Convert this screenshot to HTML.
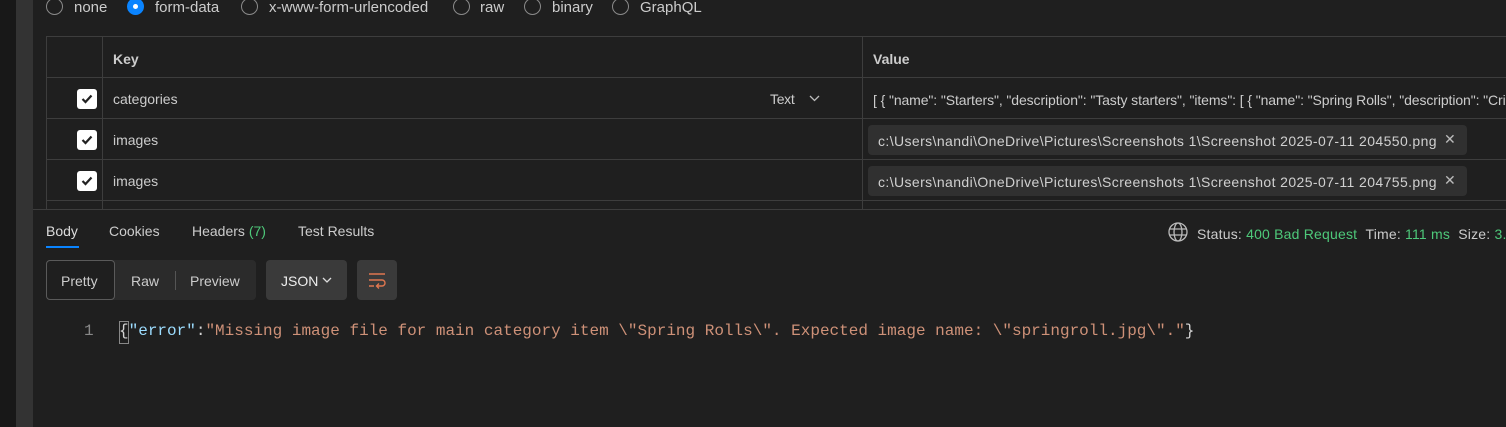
<!DOCTYPE html>
<html><head><meta charset="utf-8"><style>
*{box-sizing:border-box;margin:0;padding:0}
body{width:1506px;height:427px;background:#1f1f1f;position:relative;overflow:hidden;font-family:"Liberation Sans",sans-serif;color:#cccccc;font-size:14px}
.abs{position:absolute;white-space:nowrap}
.radio{position:absolute;width:17px;height:17px;border:1.5px solid #8a8a8a;border-radius:50%;top:-2px}
.cb{position:absolute;left:77px;width:20px;height:20px;background:#fff;border-radius:3px}
.cb svg{position:absolute;left:4px;top:5px}
.hl{position:absolute;left:46px;right:0;height:1px;background:#3d3d3d}
.vl{position:absolute;width:1px;background:#3d3d3d}
.chip{position:absolute;left:868px;width:599px;height:30px;background:#303030;border-radius:4px;font-size:14px;letter-spacing:0.4px;padding:8px 0 0 10px;color:#d0d0d0}
.chip span{position:absolute;left:576px;top:6px;color:#bbb;letter-spacing:0}
.code{font-family:"Liberation Mono",monospace;font-size:16px;letter-spacing:0}
</style></head><body>
<div class="abs" style="left:0;top:0;width:16px;height:427px;background:#181818"></div>
<div class="abs" style="left:16px;top:0;width:17px;height:427px;background:#333"></div>

<div class="radio" style="left:46px"></div><div class="abs" style="left:74px;top:-1px;font-size:15px">none</div>
<div class="radio" style="left:127px;background:#0a84ff;border-color:#0a84ff"><div style="position:absolute;left:4.5px;top:4.5px;width:5px;height:5px;background:#fff;border-radius:50%"></div></div><div class="abs" style="left:155px;top:-1px;font-size:15px">form-data</div>
<div class="radio" style="left:241px"></div><div class="abs" style="left:269px;top:-1px;font-size:15px">x-www-form-urlencoded</div>
<div class="radio" style="left:453px"></div><div class="abs" style="left:480px;top:-1px;font-size:15px">raw</div>
<div class="radio" style="left:524px"></div><div class="abs" style="left:552px;top:-1px;font-size:15px">binary</div>
<div class="radio" style="left:612px"></div><div class="abs" style="left:640px;top:-1px;font-size:15px">GraphQL</div>

<div class="hl" style="top:36px"></div>
<div class="hl" style="top:77px"></div>
<div class="hl" style="top:118px"></div>
<div class="hl" style="top:159px"></div>
<div class="hl" style="top:200px"></div>
<div class="vl" style="left:46px;top:36px;height:173px"></div>
<div class="vl" style="left:102px;top:36px;height:173px"></div>
<div class="vl" style="left:862px;top:36px;height:173px"></div>

<div class="abs" style="left:113px;top:51px;font-weight:bold;font-size:14px">Key</div>
<div class="abs" style="left:873px;top:51px;font-weight:bold;font-size:14px">Value</div>

<div class="cb" style="top:89px"><svg width="12" height="10" viewBox="0 0 12 10"><path d="M1.5 5 L4.5 8 L10.5 1.5" stroke="#222" stroke-width="2.2" fill="none"/></svg></div>
<div class="cb" style="top:130px"><svg width="12" height="10" viewBox="0 0 12 10"><path d="M1.5 5 L4.5 8 L10.5 1.5" stroke="#222" stroke-width="2.2" fill="none"/></svg></div>
<div class="cb" style="top:171px"><svg width="12" height="10" viewBox="0 0 12 10"><path d="M1.5 5 L4.5 8 L10.5 1.5" stroke="#222" stroke-width="2.2" fill="none"/></svg></div>
<div class="abs" style="left:113px;top:91px">categories</div>
<div class="abs" style="left:113px;top:132px">images</div>
<div class="abs" style="left:113px;top:173px">images</div>
<div class="abs" style="left:770px;top:91px;letter-spacing:-0.3px">Text</div>
<svg class="abs" style="left:809px;top:95px" width="11" height="7" viewBox="0 0 11 7"><path d="M1 1 L5.5 5.5 L10 1" stroke="#bbb" stroke-width="1.3" fill="none"/></svg>
<div class="abs" style="left:873px;top:92px;width:633px;overflow:hidden;letter-spacing:-0.1px;font-size:14px">[ { "name": "Starters", "description": "Tasty starters", "items": [ { "name": "Spring Rolls", "description": "Crispy veg rolls"</div>
<div class="chip" style="top:125px">c:\Users\nandi\OneDrive\Pictures\Screenshots 1\Screenshot 2025-07-11 204550.png<span>✕</span></div>
<div class="chip" style="top:166px">c:\Users\nandi\OneDrive\Pictures\Screenshots 1\Screenshot 2025-07-11 204755.png<span>✕</span></div>

<div class="abs" style="left:33px;top:209px;width:1473px;height:1px;background:#3d3d3d"></div>

<div class="abs" style="left:46px;top:223px;color:#ddd">Body</div>
<div class="abs" style="left:46px;top:246px;width:33px;height:2px;background:#0a84ff"></div>
<div class="abs" style="left:109px;top:223px">Cookies</div>
<div class="abs" style="left:192px;top:223px">Headers <span style="color:#4ec97a">(7)</span></div>
<div class="abs" style="left:298px;top:223px">Test Results</div>

<svg class="abs" style="left:1168px;top:222px" width="20" height="20" viewBox="0 0 20 20" fill="none" stroke="#bbb" stroke-width="1.3"><circle cx="10" cy="10" r="9"/><ellipse cx="10" cy="10" rx="4" ry="9"/><path d="M1.5 7h17M1.5 13h17"/></svg>
<div class="abs" style="left:1197px;top:226px;width:309px;overflow:hidden;letter-spacing:0.2px">Status: <span style="color:#4ec97a">400 Bad Request</span>&nbsp;&nbsp;Time: <span style="color:#4ec97a">111 ms</span>&nbsp;&nbsp;Size: <span style="color:#4ec97a">3.</span></div>

<div class="abs" style="left:46px;top:260px;width:210px;height:40px;background:#2b2b2b;border-radius:4px"></div>
<div class="abs" style="left:46px;top:260px;width:69px;height:40px;background:#1f1f1f;border:1px solid #5a5a5a;border-radius:4px"></div>
<div class="abs" style="left:61px;top:273px">Pretty</div>
<div class="abs" style="left:131px;top:273px">Raw</div>
<div class="abs" style="left:175px;top:271px;width:1px;height:19px;background:#555"></div>
<div class="abs" style="left:190px;top:273px">Preview</div>
<div class="abs" style="left:266px;top:260px;width:81px;height:40px;background:#3a3a3a;border-radius:4px"></div>
<div class="abs" style="left:281px;top:273px;color:#eee">JSON</div>
<svg class="abs" style="left:322px;top:277px" width="10" height="6" viewBox="0 0 10 6"><path d="M1 1 L5 5 L9 1" stroke="#ddd" stroke-width="1.3" fill="none"/></svg>
<div class="abs" style="left:357px;top:260px;width:40px;height:40px;background:#3a3a3a;border-radius:4px"></div>
<svg class="abs" style="left:367px;top:270px" width="20" height="20" viewBox="0 0 20 20" fill="none" stroke="#e0764f" stroke-width="1.4"><path d="M2 4h16M2 10h13a3 3 0 0 1 0 6h-5M12 13.5l-2.5 2.5 2.5 2.5M2 16h5"/></svg>

<div class="abs code" style="left:84px;top:322px;color:#888">1</div>
<div class="abs" style="left:119px;top:321px;width:10px;height:23px;border:1px solid #888"></div>
<div class="abs code" style="left:119px;top:322px;color:#d4d4d4">{<span style="color:#9cdcfe">"error"</span>:<span style="color:#ce9178">"Missing image file for main category item \"Spring Rolls\". Expected image name: \"springroll.jpg\"."</span>}</div>
</body></html>
